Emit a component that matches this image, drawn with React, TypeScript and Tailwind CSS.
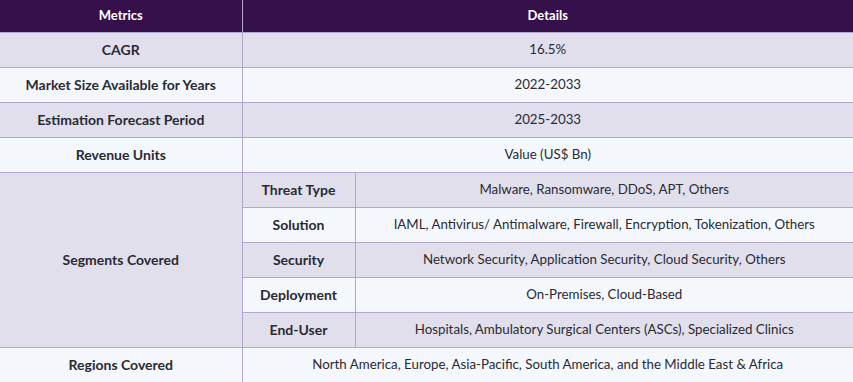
import React from 'react';

const rows = [
  { metric: 'CAGR', detail: '16.5%' },
  { metric: 'Market Size Available for Years', detail: '2022-2033' },
  { metric: 'Estimation Forecast Period', detail: '2025-2033' },
  { metric: 'Revenue Units', detail: 'Value (US$ Bn)' },
];

const segments = [
  { name: 'Threat Type', detail: 'Malware, Ransomware, DDoS, APT, Others' },
  { name: 'Solution', detail: 'IAML, Antivirus/ Antimalware, Firewall, Encryption, Tokenization, Others' },
  { name: 'Security', detail: 'Network Security, Application Security, Cloud Security, Others' },
  { name: 'Deployment', detail: 'On-Premises, Cloud-Based' },
  { name: 'End-User', detail: 'Hospitals, Ambulatory Surgical Centers (ASCs), Specialized Clinics' },
];

const odd = 'bg-[#e1dfeb]';
const even = 'bg-[#f4f8fc]';

const App: React.FC = () => {
  return (
    <div className="w-[853px] h-[382px] overflow-hidden bg-white font-['Lato',sans-serif] text-[13.3px] text-[#2a2a33]">
      <table className="w-full border-collapse text-center">
        <thead>
          <tr className="h-[32px] bg-[#36104a] text-[13px] text-white">
            <th className="w-[242px] font-bold border-r border-[#b3a6cf]">Metrics</th>
            <th colSpan={2} className="font-bold">Details</th>
          </tr>
        </thead>
        <tbody>
          {rows.map((r, i) => (
            <tr key={r.metric} className={`h-[35px] ${i % 2 === 0 ? odd : even}`}>
              <td className="text-[14px] font-bold border-t border-r border-[#b3a6cf]">{r.metric}</td>
              <td colSpan={2} className="border-t border-[#b3a6cf]">{r.detail}</td>
            </tr>
          ))}
          {segments.map((s, i) => (
            <tr key={s.name} className={`h-[35px] ${i % 2 === 0 ? odd : even}`}>
              {i === 0 && (
                <td rowSpan={5} className={`text-[14px] font-bold border-t border-r border-[#b3a6cf] ${odd}`}>
                  Segments Covered
                </td>
              )}
              <td className="w-[113px] text-[14px] font-bold border-t border-r border-[#b3a6cf]">{s.name}</td>
              <td className="border-t border-[#b3a6cf]">{s.detail}</td>
            </tr>
          ))}
          <tr className={`h-[35px] ${even}`}>
            <td className="text-[14px] font-bold border-t border-r border-[#b3a6cf]">Regions Covered</td>
            <td colSpan={2} className="border-t border-[#b3a6cf]">
              North America, Europe, Asia-Pacific, South America, and the Middle East &amp; Africa
            </td>
          </tr>
        </tbody>
      </table>
    </div>
  );
};

export default App;
